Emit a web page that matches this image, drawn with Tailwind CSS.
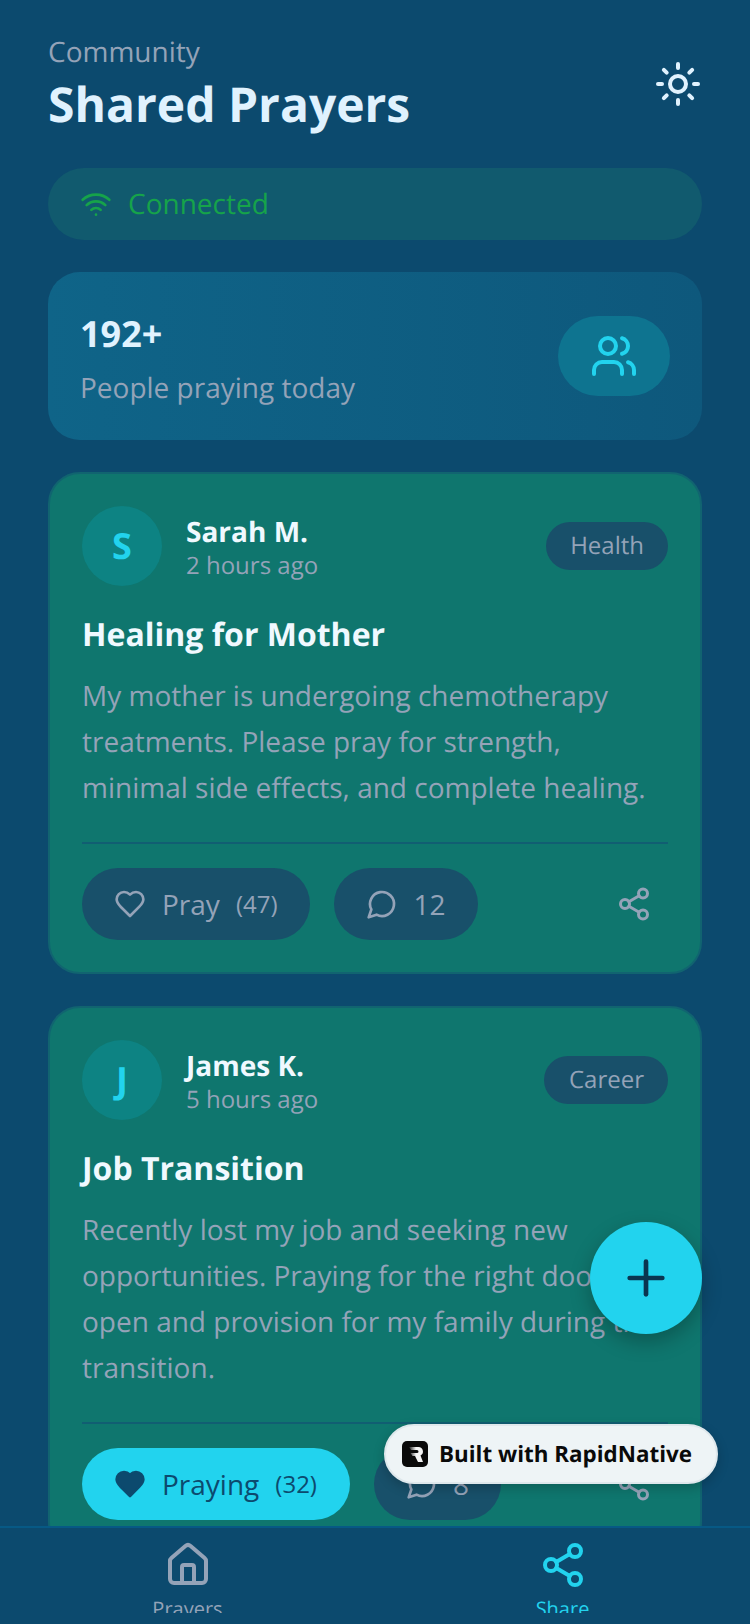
<!DOCTYPE html>
<html lang="en">
    <head>
        <meta charset="UTF-8" />
        <meta name="viewport" content="width=device-width, initial-scale=1.0" />
        <title>Shared Prayers</title>
        <script src="https://cdn.jsdelivr.net/npm/@tailwindcss/browser@4"></script>
    </head>
    <body class="bg-[#0c4a6e] font-['Open_Sans',sans-serif] [text-rendering:geometricPrecision]">
        <div class="relative flex flex-col h-[1624px] w-[750px] overflow-hidden">
            <main class="flex-1 min-h-0 overflow-hidden px-12 pt-8">
                <!-- header -->
                <header class="flex items-center justify-between h-[104px]">
                    <div class="pt-[2px]">
                        <p class="text-[28px] leading-[38px] text-[#94a3b8]">Community</p>
                        <h1 class="mt-[2px] text-[48px] leading-[64px] font-bold text-[#e0f2fe]">Shared Prayers</h1>
                    </div>
                    <svg width="48" height="48" viewBox="0 0 24 24" fill="none" stroke="#e0f2fe" stroke-width="2" stroke-linecap="round" stroke-linejoin="round">
                        <circle cx="12" cy="12" r="4" /><path d="M12 2v2" /><path d="M12 20v2" /><path d="m4.93 4.93 1.41 1.41" /><path d="m17.66 17.66 1.41 1.41" /><path d="M2 12h2" /><path d="M20 12h2" /><path d="m6.34 17.66-1.41 1.41" /><path d="m19.07 4.93-1.41 1.41" />
                    </svg>
                </header>

                <!-- connection -->
                <div class="mt-8 flex items-center gap-4 h-[72px] px-8 rounded-full bg-[#115a6e]">
                    <svg width="32" height="32" viewBox="0 0 24 24" fill="none" stroke="#16a34a" stroke-width="2" stroke-linecap="round" stroke-linejoin="round">
                        <path d="M12 20h.01" /><path d="M2 8.82a15 15 0 0 1 20 0" /><path d="M5 12.859a10 10 0 0 1 14 0" /><path d="M8.5 16.429a5 5 0 0 1 7 0" />
                    </svg>
                    <span class="text-[28px] text-[#16a34a]">Connected</span>
                </div>

                <!-- stats -->
                <div class="mt-8 flex items-center justify-between h-[168px] px-8 rounded-[32px] bg-gradient-to-r from-[#0f6488] to-[#0e587c]">
                    <div class="pt-[6px]">
                        <p class="text-[36px] leading-[52px] font-bold text-[#e0f2fe]">192+</p>
                        <p class="mt-[6px] text-[28px] leading-[44px] text-[#94a3b8]">People praying today</p>
                    </div>
                    <div class="flex items-center justify-center w-[112px] h-[80px] rounded-full bg-[#0e7490]">
                        <svg width="48" height="48" viewBox="0 0 24 24" fill="none" stroke="#22d3ee" stroke-width="2" stroke-linecap="round" stroke-linejoin="round">
                            <path d="M16 21v-2a4 4 0 0 0-4-4H6a4 4 0 0 0-4 4v2" /><circle cx="9" cy="7" r="4" /><path d="M22 21v-2a4 4 0 0 0-3-3.87" /><path d="M16 3.13a4 4 0 0 1 0 7.75" />
                        </svg>
                    </div>
                </div>

                <!-- card 1 -->
                <article class="mt-8 rounded-[32px] border-2 border-[#116470] bg-[#0f766e] p-8">
                    <div class="flex items-center">
                        <div class="flex items-center justify-center w-20 h-20 rounded-full bg-[#0d8383] text-[36px] font-bold text-[#22d3ee]">S</div>
                        <div class="ml-6 flex-1 pt-1">
                            <p class="text-[28px] leading-[36px] font-bold text-[#f0f9ff]">Sarah M.</p>
                            <p class="text-[24px] leading-[32px] text-[#94a3b8]">2 hours ago</p>
                        </div>
                        <span class="rounded-full bg-[#18506a] px-6 py-2 text-[24px] leading-[32px] text-[#94a3b8]">Health</span>
                    </div>
                    <h2 class="mt-[27px] text-[32px] leading-[44px] font-bold text-[#f0f9ff]">Healing for Mother</h2>
                    <p class="mt-4 text-[28px] leading-[46px] text-[#94a3b8]">My mother is undergoing chemotherapy treatments. Please pray for strength, minimal side effects, and complete healing.</p>
                    <div class="mt-[31px] flex items-center gap-6 border-t-2 border-[#115e72] pt-6">
                        <button class="flex items-center h-[72px] pl-8 pr-[33px] rounded-full bg-[#18506a] text-[#94a3b8]">
                            <svg width="32" height="32" viewBox="0 0 24 24" fill="none" stroke="#94a3b8" stroke-width="2" stroke-linecap="round" stroke-linejoin="round"><path d="M19 14c1.49-1.46 3-3.21 3-5.5A5.5 5.5 0 0 0 16.5 3c-1.76 0-3 .5-4.5 2-1.5-1.5-2.74-2-4.5-2A5.5 5.5 0 0 0 2 8.5c0 2.3 1.5 4.05 3 5.5l7 7Z" /></svg>
                            <span class="ml-4 text-[28px]">Pray</span>
                            <span class="ml-4 text-[24px]">(47)</span>
                        </button>
                        <button class="flex items-center h-[72px] pl-8 pr-8 rounded-full bg-[#18506a] text-[#94a3b8]">
                            <svg width="32" height="32" viewBox="0 0 24 24" fill="none" stroke="#94a3b8" stroke-width="2" stroke-linecap="round" stroke-linejoin="round"><path d="M7.9 20A9 9 0 1 0 4 16.1L2 22Z" /></svg>
                            <span class="ml-[15px] text-[28px]">12</span>
                        </button>
                        <button class="ml-auto p-4">
                            <svg width="36" height="36" viewBox="0 0 24 24" fill="none" stroke="#94a3b8" stroke-width="2" stroke-linecap="round" stroke-linejoin="round"><circle cx="18" cy="5" r="3" /><circle cx="6" cy="12" r="3" /><circle cx="18" cy="19" r="3" /><path d="m8.59 13.51 6.83 3.98" /><path d="m15.41 6.51-6.82 3.98" /></svg>
                        </button>
                    </div>
                </article>

                <!-- card 2 -->
                <article class="mt-8 rounded-[32px] border-2 border-[#116470] bg-[#0f766e] p-8">
                    <div class="flex items-center">
                        <div class="flex items-center justify-center w-20 h-20 rounded-full bg-[#0d8383] text-[36px] font-bold text-[#22d3ee]">J</div>
                        <div class="ml-6 flex-1 pt-1">
                            <p class="text-[28px] leading-[36px] font-bold text-[#f0f9ff]">James K.</p>
                            <p class="text-[24px] leading-[32px] text-[#94a3b8]">5 hours ago</p>
                        </div>
                        <span class="rounded-full bg-[#18506a] pl-[25px] pr-6 py-2 text-[24px] leading-[32px] text-[#94a3b8]">Career</span>
                    </div>
                    <h2 class="mt-[27px] text-[32px] leading-[44px] font-bold text-[#f0f9ff]">Job Transition</h2>
                    <p class="mt-4 text-[28px] leading-[46px] text-[#94a3b8]">Recently lost my job and seeking new opportunities. Praying for the right doors to open and provision for my family during this transition.</p>
                    <div class="mt-[31px] flex items-center gap-6 border-t-2 border-[#115e72] pt-6">
                        <button class="flex items-center h-[72px] pl-8 pr-[33px] rounded-full bg-[#22d3ee] text-[#0c4a6e]">
                            <svg width="32" height="32" viewBox="0 0 24 24" fill="#0c4a6e" stroke="#0c4a6e" stroke-width="2" stroke-linecap="round" stroke-linejoin="round"><path d="M19 14c1.49-1.46 3-3.21 3-5.5A5.5 5.5 0 0 0 16.5 3c-1.76 0-3 .5-4.5 2-1.5-1.5-2.74-2-4.5-2A5.5 5.5 0 0 0 2 8.5c0 2.3 1.5 4.05 3 5.5l7 7Z" /></svg>
                            <span class="ml-4 text-[28px]">Praying</span>
                            <span class="ml-4 text-[24px]">(32)</span>
                        </button>
                        <button class="flex items-center h-[72px] pl-8 pr-8 rounded-full bg-[#18506a] text-[#94a3b8]">
                            <svg width="32" height="32" viewBox="0 0 24 24" fill="none" stroke="#94a3b8" stroke-width="2" stroke-linecap="round" stroke-linejoin="round"><path d="M7.9 20A9 9 0 1 0 4 16.1L2 22Z" /></svg>
                            <span class="ml-[15px] text-[28px]">8</span>
                        </button>
                        <button class="ml-auto p-4">
                            <svg width="36" height="36" viewBox="0 0 24 24" fill="none" stroke="#94a3b8" stroke-width="2" stroke-linecap="round" stroke-linejoin="round"><circle cx="18" cy="5" r="3" /><circle cx="6" cy="12" r="3" /><circle cx="18" cy="19" r="3" /><path d="m8.59 13.51 6.83 3.98" /><path d="m15.41 6.51-6.82 3.98" /></svg>
                        </button>
                    </div>
                </article>
            </main>

            <!-- bottom nav -->
            <nav class="flex h-[98px] shrink-0 border-t-2 border-[#075985] bg-[#0c4a6e]">
                <div class="flex flex-1 flex-col items-center pt-[13px] h-[85px] overflow-hidden">
                    <svg class="shrink-0" width="48" height="48" viewBox="0 0 24 24" fill="none" stroke="#94a3b8" stroke-width="2" stroke-linecap="round" stroke-linejoin="round"><path d="M15 21v-8a1 1 0 0 0-1-1h-4a1 1 0 0 0-1 1v8" /><path d="M3 10a2 2 0 0 1 .709-1.528l7-5.999a2 2 0 0 1 2.582 0l7 5.999A2 2 0 0 1 21 10v9a2 2 0 0 1-2 2H5a2 2 0 0 1-2-2z" /></svg>
                    <span class="mt-[6px] text-[20px] leading-[28px] text-[#94a3b8]">Prayers</span>
                </div>
                <div class="flex flex-1 flex-col items-center pt-[13px] h-[85px] overflow-hidden">
                    <svg class="shrink-0" width="48" height="48" viewBox="0 0 24 24" fill="none" stroke="#22d3ee" stroke-width="2" stroke-linecap="round" stroke-linejoin="round"><circle cx="18" cy="5" r="3" /><circle cx="6" cy="12" r="3" /><circle cx="18" cy="19" r="3" /><path d="m8.59 13.51 6.83 3.98" /><path d="m15.41 6.51-6.82 3.98" /></svg>
                    <span class="mt-[6px] text-[20px] leading-[28px] text-[#22d3ee]">Share</span>
                </div>
            </nav>

            <!-- floating add button -->
            <button class="absolute left-[590px] top-[1222px] flex items-center justify-center w-[112px] h-[112px] rounded-full bg-[#22d3ee] shadow-[0_8px_20px_rgba(0,0,0,0.25)]">
                <svg width="56" height="56" viewBox="0 0 24 24" fill="none" stroke="#0a3550" stroke-width="2" stroke-linecap="round" stroke-linejoin="round"><path d="M5 12h14" /><path d="M12 5v14" /></svg>
            </button>

            <!-- built with badge -->
            <div class="absolute left-[384px] top-[1424px] flex items-center gap-[11px] w-[334px] h-[60px] pl-4 rounded-full border-2 border-[#dfe8ec] bg-[#eef4f6] shadow-[0_4px_12px_rgba(0,0,0,0.2)]">
                <svg class="shrink-0" width="26" height="26" viewBox="0 0 26 26">
                    <defs>
                        <linearGradient id="logo-fade" x1="0" y1="0" x2="1" y2="0">
                            <stop offset="0" stop-color="#1a1a1a" />
                            <stop offset="0.5" stop-color="#f4f4f4" />
                        </linearGradient>
                    </defs>
                    <rect width="26" height="26" rx="5" fill="#0a0a0a" />
                    <path d="M7 6h9.500a4.500 4.500 0 0 1 2 8.500L21 21h-5l-3-6h-2.500l-2-3H15a1.300 1.300 0 0 0 0-3H9z" fill="url(#logo-fade)" />
                </svg>
                <span class="text-[22.4px] font-bold text-[#0a0a0a] whitespace-nowrap">Built with RapidNative</span>
            </div>
        </div>
    </body>
</html>
